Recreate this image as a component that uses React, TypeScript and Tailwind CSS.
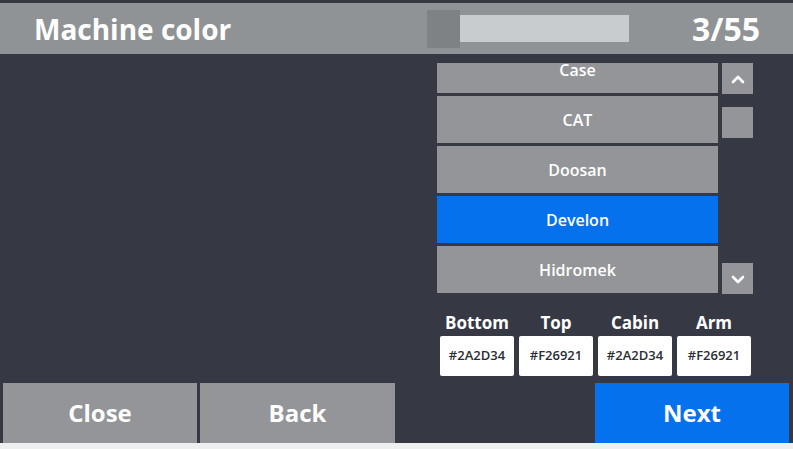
import React from "react";

const items = [
  { name: "Case", active: false },
  { name: "CAT", active: false },
  { name: "Doosan", active: false },
  { name: "Develon", active: true },
  { name: "Hidromek", active: false },
];

const colors = [
  { label: "Bottom", value: "#2A2D34" },
  { label: "Top", value: "#F26921" },
  { label: "Cabin", value: "#2A2D34" },
  { label: "Arm", value: "#F26921" },
];

function Chevron({ up }: { up?: boolean }) {
  return (
    <svg width="16" height="16" viewBox="0 0 16 16" fill="none">
      <path
        d={up ? "M3 11 L8 6 L13 11" : "M3 6 L8 11 L13 6"}
        stroke="white"
        strokeWidth="2.6"
        strokeLinecap="round"
        strokeLinejoin="round"
      />
    </svg>
  );
}

export default function App() {
  return (
    <div
      className="w-[793px] h-[449px] bg-[#363943] flex flex-col overflow-hidden text-white"
      style={{ fontFamily: '"Open Sans", "Noto Sans", sans-serif' }}
    >
      <div className="h-[3px] shrink-0" />
      {/* Header */}
      <div className="h-[51px] shrink-0 bg-[#909396] flex items-center">
        <div className="w-[427px] pl-[34px] text-[28px] font-bold leading-none">Machine color</div>
        <div className="flex items-center">
          <div className="w-[33px] h-[38px] bg-[#7f8285]" />
          <div className="w-[169px] h-[27px] bg-[#c9cccf]" />
        </div>
        <div className="flex-1 text-right pr-[33px] text-[32px] font-bold leading-none">3/55</div>
      </div>

      {/* Main */}
      <div className="flex-1 flex">
        <div className="w-[437px]" />
        <div className="flex-1 flex flex-col pt-[9px]">
          <div className="flex">
            <div className="w-[281px] h-[231px] overflow-hidden">
              <div className="flex flex-col gap-[3px] mt-[-17px]">
                {items.map((it) => (
                  <div
                    key={it.name}
                    className={`h-[47px] flex items-center justify-center text-[16px] font-semibold ${
                      it.active ? "bg-[#0671ed]" : "bg-[#939598]"
                    }`}
                  >
                    {it.name}
                  </div>
                ))}
              </div>
            </div>
            <div className="ml-[4px] w-[31px] h-[231px] flex flex-col">
              <div className="h-[31px] bg-[#939598] flex items-center justify-center">
                <Chevron up />
              </div>
              <div className="mt-[13px] h-[31px] bg-[#939598]" />
              <div className="flex-1" />
              <div className="h-[31px] bg-[#939598] flex items-center justify-center">
                <Chevron />
              </div>
            </div>
          </div>
          <div className="flex gap-[5px] ml-[3px] mt-[19px]">
            {colors.map((c) => (
              <div key={c.label} className="w-[74px] flex flex-col items-center">
                <div className="text-[17px] font-bold leading-[20px]">{c.label}</div>
                <div className="mt-[3px] w-[74px] h-[40px] bg-white rounded-[2px] flex items-center justify-center text-[13px] font-semibold text-[#2a2d34]">
                  {c.value}
                </div>
              </div>
            ))}
          </div>
        </div>
      </div>

      {/* Bottom buttons */}
      <div className="h-[60px] shrink-0 flex pl-[3px] pr-[4px] gap-[3px]">
        <div className="w-[194px] bg-[#939598] flex items-center justify-center text-[24px] font-bold">Close</div>
        <div className="w-[195px] bg-[#939598] flex items-center justify-center text-[24px] font-bold">Back</div>
        <div className="flex-1" />
        <div className="w-[194px] bg-[#0671ed] flex items-center justify-center text-[24px] font-bold">Next</div>
      </div>
      <div className="h-[6px] shrink-0 bg-[#eef0f0]" />
    </div>
  );
}
